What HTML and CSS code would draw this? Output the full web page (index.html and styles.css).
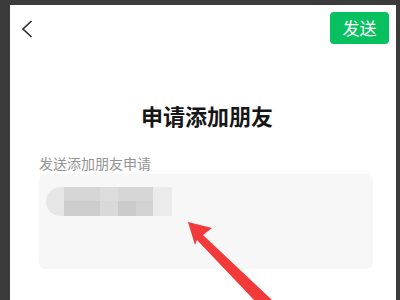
FILE: index.html
```html
<!DOCTYPE html>
<html lang="zh">
<head>
<meta charset="utf-8">
<link rel="stylesheet" href="styles.css">
</head>
<body>
<div class="screen">
  <div class="header">
    <svg class="back" width="12" height="18" viewBox="0 0 12 18">
      <path d="M10.5 1 L2 9 L10.5 17" fill="none" stroke="#2b2b2b" stroke-width="1.6"/>
    </svg>
    <button class="send">发送</button>
  </div>
  <h1 class="title">申请添加朋友</h1>
  <div class="label">发送添加朋友申请</div>
  <div class="box">
    <div class="pill">
      <div class="cap"></div>
      <div class="mosaic">
        <div class="m a"></div><div class="m a"></div><div class="m b"></div><div class="m a"></div><div class="m a"></div>
        <div class="m c"></div><div class="m c"></div><div class="m d"></div><div class="m e"></div><div class="m f"></div>
      </div>
      <div class="tail"></div>
    </div>
  </div>
  <svg class="arrow" width="100" height="90" viewBox="180 215 100 90">
    <polygon points="188,222 212,228 203,235 272,300 254,300 197,240 195,245" fill="#f23a3a"/>
  </svg>
</div>
</body>
</html>
```
FILE: styles.css
```css
html, body {
  margin: 0;
  padding: 0;
  background: #3b3b3b;
  width: 400px;
  height: 300px;
  overflow: hidden;
}
.screen {
  position: relative;
  margin: 5px 0 0 10px;
  width: 386px;
  height: 295px;
  background: #ffffff;
  font-family: "Noto Sans CJK SC", "Noto Sans", sans-serif;
}
.header {
  display: flex;
  justify-content: space-between;
  align-items: flex-start;
  padding: 7px 7px 0 11px;
  height: 32px;
}
.back {
  margin-top: 8px;
}
.send {
  width: 59px;
  height: 32px;
  border: none;
  border-radius: 4px;
  background: #07c160;
  color: #ffffff;
  font-family: "Noto Sans CJK SC", sans-serif;
  font-size: 17px;
  line-height: 32px;
  padding: 0;
}
.title {
  margin: 58px 0 0 0;
  height: 26px;
  line-height: 26px;
  font-size: 22px;
  font-weight: 700;
  color: #161616;
  text-align: center;
  padding-left: 8px;
}
.label {
  margin: 27px 0 0 29px;
  font-size: 14px;
  line-height: 16px;
  color: #949494;
}
.box {
  margin: 3px 0 0 29px;
  width: 334px;
  height: 95px;
  border-radius: 7px;
  background: #f7f7f7;
  padding: 13px 0 0 7px;
  box-sizing: border-box;
}
.pill {
  display: flex;
  height: 29px;
}
.cap {
  width: 18px;
  background: #e6e6e6;
  border-radius: 15px 0 0 15px;
}
.mosaic {
  display: grid;
  grid-template-columns: 18px 18px 18px 18px 17px;
  grid-template-rows: 14px 15px;
}
.m.a { background: #d6d6d6; }
.m.b { background: #dcdcdc; }
.m.c { background: #cdcdcd; }
.m.d { background: #d9d9d9; }
.m.e { background: #cbcbcb; }
.m.f { background: #d2d2d2; }
.tail {
  width: 19px;
  background: #ebebeb;
}
.arrow {
  position: absolute;
  left: 170px;
  top: 210px;
}
```
